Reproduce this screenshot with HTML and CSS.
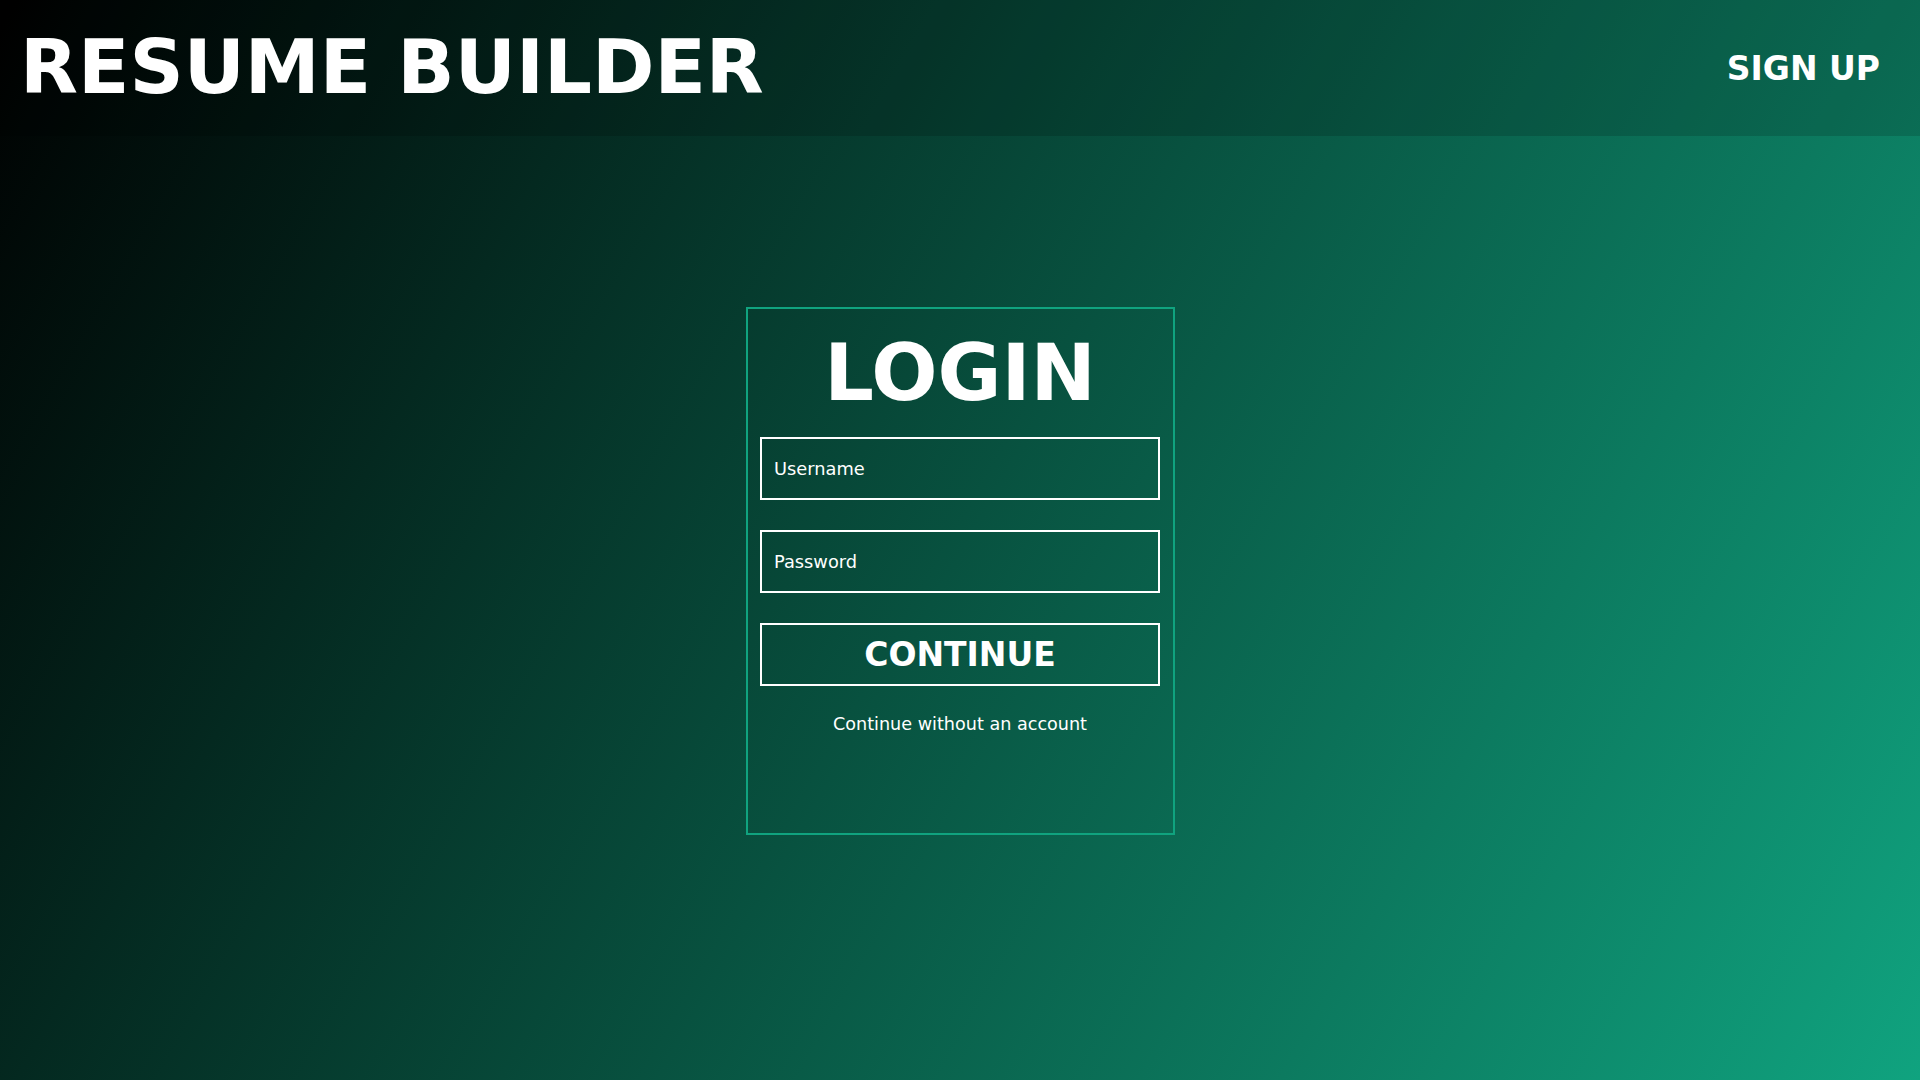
FILE: index.html
```html
<!DOCTYPE html>
<html lang="en">
<head>
<meta charset="utf-8">
<title>Resume Builder - Login</title>
<link rel="stylesheet" href="styles.css">
</head>
<body>
  <header class="topbar">
    <h1 class="brand">RESUME BUILDER</h1>
    <a class="signup" href="#">SIGN UP</a>
  </header>
  <main class="main">
    <form class="login-box">
      <h2 class="login-title">LOGIN</h2>
      <input class="field" type="text" placeholder="Username">
      <input class="field" type="password" placeholder="Password">
      <button class="continue-btn" type="button">CONTINUE</button>
      <a class="guest-link" href="#">Continue without an account</a>
    </form>
  </main>
</body>
</html>
```

FILE: styles.css
```css
html, body {
  margin: 0;
  padding: 0;
}

body {
  min-height: 100vh;
  background: linear-gradient(120deg, #000000 0%, #10a37f 100%);
  font-family: "DejaVu Sans", "Verdana", sans-serif;
  color: #ffffff;
}

.topbar {
  height: 136px;
  box-sizing: border-box;
  display: flex;
  align-items: center;
  justify-content: space-between;
  padding: 0 40px 0 20px;
  background: rgba(0, 0, 0, 0.15);
}

.brand {
  margin: 0;
  font-size: 75.3px;
  font-weight: bold;
  line-height: 1;
  color: #ffffff;
}

.signup {
  font-size: 33px;
  font-weight: bold;
  color: #ffffff;
  text-decoration: none;
}

.main {
  padding-top: 171px;
}

.login-box {
  width: 429px;
  height: 528px;
  box-sizing: border-box;
  margin: 0 auto;
  border: 2px solid #10a37f;
  padding: 19.3px 12px 12px;
  display: flex;
  flex-direction: column;
  align-items: center;
}

.login-title {
  margin: 0 0 18.6px;
  font-size: 78px;
  font-weight: bold;
  line-height: normal;
  color: #ffffff;
}

.field {
  width: 400px;
  height: 63.6px;
  box-sizing: border-box;
  border: 2px solid #ffffff;
  background: transparent;
  padding: 0 12px;
  margin: 0 0 29.4px;
  font-family: "DejaVu Sans", sans-serif;
  font-size: 17.8px;
  color: #ffffff;
  outline: none;
}

.field::placeholder {
  color: #ffffff;
  opacity: 1;
}

.continue-btn {
  width: 400px;
  height: 63.6px;
  box-sizing: border-box;
  border: 2px solid #ffffff;
  background: transparent;
  padding: 0;
  font-family: "DejaVu Sans", sans-serif;
  font-size: 33px;
  font-weight: bold;
  color: #ffffff;
  cursor: pointer;
}

.guest-link {
  margin-top: 27.4px;
  font-size: 17.6px;
  line-height: normal;
  color: #ffffff;
  text-decoration: none;
}
```
